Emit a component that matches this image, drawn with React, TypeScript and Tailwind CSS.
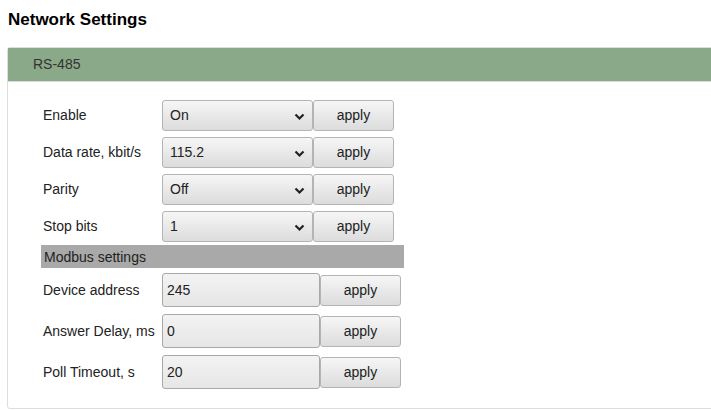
import React from 'react';

const Chevron: React.FC = () => (
    <svg width="11" height="8" viewBox="0 0 11 8" className="absolute right-[7px] top-[12px]">
        <path d="M1.5 1.5 L5.5 5.5 L9.5 1.5" fill="none" stroke="#222" strokeWidth="2.2" />
    </svg>
);

const ApplyButton: React.FC<{ className?: string }> = ({ className = '' }) => (
    <button
        className={`w-[81px] h-[31px] rounded-[3px] border border-[#b4b4b4] bg-gradient-to-b from-[#f6f6f6] to-[#dcdcdc] text-[14px] text-[#222] ${className}`}
    >
        apply
    </button>
);

const SelectRow: React.FC<{ label: string; value: string }> = ({ label, value }) => (
    <div className="flex items-center h-[31px]">
        <div className="w-[121px] pl-[2px] text-[14px] text-[#222]">{label}</div>
        <div className="relative w-[151px] h-[31px] rounded-[3px] border border-[#b4b4b4] bg-gradient-to-b from-[#f6f6f6] to-[#dcdcdc] pl-[7px] flex items-center text-[14px] text-[#222]">
            {value}
            <Chevron />
        </div>
        <ApplyButton />
    </div>
);

const InputRow: React.FC<{ label: string; value: string }> = ({ label, value }) => (
    <div className="flex items-center h-[34px]">
        <div className="w-[121px] pl-[2px] text-[14px] text-[#222] whitespace-nowrap">{label}</div>
        <div className="w-[158px] h-[34px] rounded-[3px] border border-[#a8a8a8] bg-gradient-to-b from-[#f3f3f3] to-[#e6e6e6] pl-[4px] flex items-center text-[14px] text-[#222]">
            {value}
        </div>
        <ApplyButton className="h-[30px]" />
    </div>
);

const App: React.FC = () => {
    return (
        <div className="w-[711px] h-[410px] bg-white overflow-hidden font-['Liberation_Sans',Arial,sans-serif]">
            <h2 className="pl-[8px] pt-[10px] text-[17px] leading-[20px] font-bold text-black">Network Settings</h2>

            <div className="ml-[7px] mt-[17px] w-[720px] h-[362px] border border-[#ddd] rounded-[3px]">
                <div className="h-[34px] bg-[#8aa988] border-b border-[#d6ddd5] pl-[25px] flex items-center text-[14px] text-[#333]">
                    RS-485
                </div>

                <div className="ml-[33px] mt-[18px] w-[363px]">
                    <div className="flex flex-col gap-[6px]">
                        <SelectRow label="Enable" value="On" />
                        <SelectRow label="Data rate, kbit/s" value="115.2" />
                        <SelectRow label="Parity" value="Off" />
                        <SelectRow label="Stop bits" value="1" />
                    </div>

                    <div className="mt-[3px] h-[23px] bg-[#a9a9a9] pl-[3px] pt-[2px] flex items-center text-[14px] text-[#222]">
                        Modbus settings
                    </div>

                    <div className="mt-[5px] flex flex-col gap-[7px]">
                        <InputRow label="Device address" value="245" />
                        <InputRow label="Answer Delay, ms" value="0" />
                        <InputRow label="Poll Timeout, s" value="20" />
                    </div>
                </div>
            </div>
        </div>
    );
};

export default App;
